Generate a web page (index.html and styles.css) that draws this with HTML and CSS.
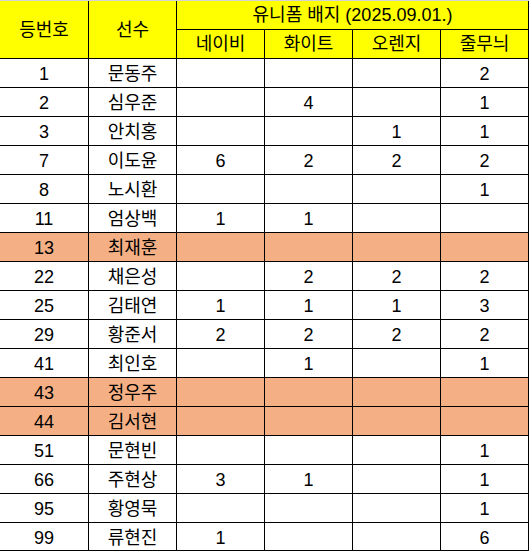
FILE: index.html
```html
<!DOCTYPE html>
<html lang="ko">
<head>
<meta charset="utf-8">
<title>유니폼 배지</title>
<link rel="stylesheet" href="styles.css">
</head>
<body>
<div class="sheet">
<table class="badges">
  <colgroup>
    <col class="c-first"><col class="c"><col class="c"><col class="c"><col class="c"><col class="c">
  </colgroup>
  <thead>
    <tr class="h1">
      <th rowspan="2">등번호</th>
      <th rowspan="2">선수</th>
      <th colspan="4">유니폼 배지 (2025.09.01.)</th>
    </tr>
    <tr class="h2">
      <th>네이비</th>
      <th>화이트</th>
      <th>오렌지</th>
      <th>줄무늬</th>
    </tr>
  </thead>
  <tbody>
    <tr><td>1</td><td>문동주</td><td></td><td></td><td></td><td>2</td></tr>
    <tr><td>2</td><td>심우준</td><td></td><td>4</td><td></td><td>1</td></tr>
    <tr><td>3</td><td>안치홍</td><td></td><td></td><td>1</td><td>1</td></tr>
    <tr><td>7</td><td>이도윤</td><td>6</td><td>2</td><td>2</td><td>2</td></tr>
    <tr><td>8</td><td>노시환</td><td></td><td></td><td></td><td>1</td></tr>
    <tr><td>11</td><td>엄상백</td><td>1</td><td>1</td><td></td><td></td></tr>
    <tr class="out"><td>13</td><td>최재훈</td><td></td><td></td><td></td><td></td></tr>
    <tr><td>22</td><td>채은성</td><td></td><td>2</td><td>2</td><td>2</td></tr>
    <tr><td>25</td><td>김태연</td><td>1</td><td>1</td><td>1</td><td>3</td></tr>
    <tr><td>29</td><td>황준서</td><td>2</td><td>2</td><td>2</td><td>2</td></tr>
    <tr><td>41</td><td>최인호</td><td></td><td>1</td><td></td><td>1</td></tr>
    <tr class="out"><td>43</td><td>정우주</td><td></td><td></td><td></td><td></td></tr>
    <tr class="out"><td>44</td><td>김서현</td><td></td><td></td><td></td><td></td></tr>
    <tr><td>51</td><td>문현빈</td><td></td><td></td><td></td><td>1</td></tr>
    <tr><td>66</td><td>주현상</td><td>3</td><td>1</td><td></td><td>1</td></tr>
    <tr><td>95</td><td>황영묵</td><td></td><td></td><td></td><td>1</td></tr>
    <tr class="last"><td>99</td><td>류현진</td><td>1</td><td></td><td></td><td>6</td></tr>
  </tbody>
</table>
</div>
</body>
</html>
```
FILE: styles.css
```css
html, body {
  margin: 0;
  padding: 0;
  background: #ffffff;
}
.sheet {
  border-top: 1px solid #d4d4d4;
  width: 529px;
}
.badges {
  border-collapse: separate;
  border-spacing: 0;
  table-layout: fixed;
  width: 529px;
  font-family: "Liberation Sans", "Noto Sans CJK KR", sans-serif;
  font-size: 18px;
  color: #000000;
}
.c-first { width: 89px; }
.c { width: 88px; }
.badges th,
.badges td {
  border-right: 1px solid #000000;
  border-bottom: 1px solid #000000;
  padding: 0;
  text-align: center;
  vertical-align: middle;
  line-height: 20px;
  height: 28px;
  box-sizing: content-box;
  overflow: hidden;
  white-space: nowrap;
}
.badges th {
  background: #ffff00;
  font-weight: normal;
}
.badges td {
  padding-top: 2px;
  height: 26px;
}
.out td {
  background: #f4b084;
}
.last td {
  height: 25px;
}
```
